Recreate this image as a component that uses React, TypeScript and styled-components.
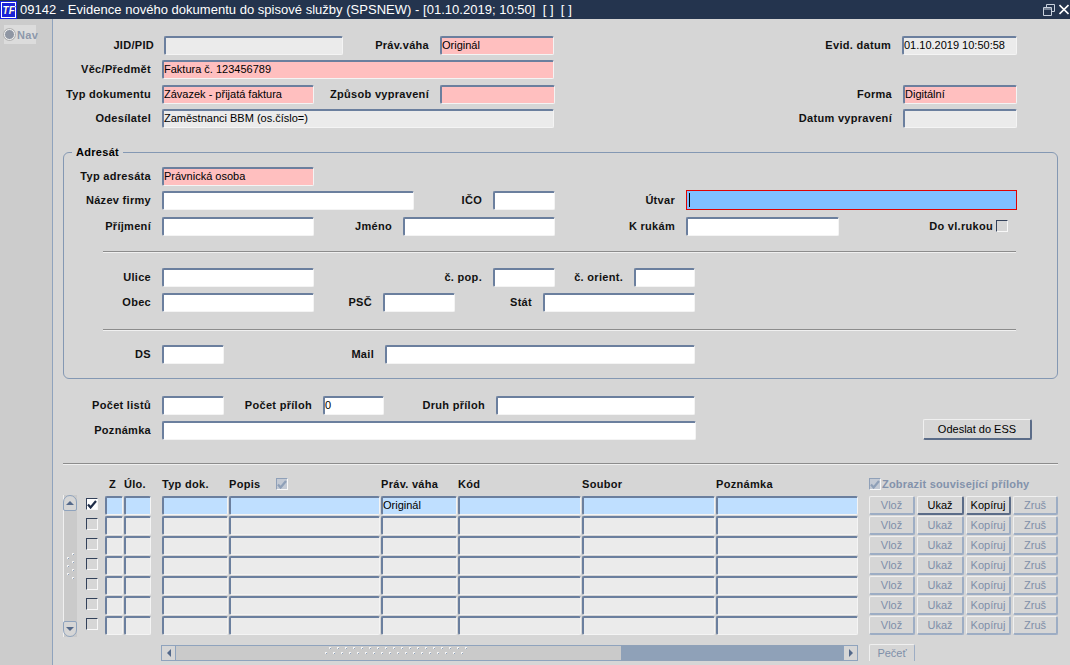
import React from 'react';
import styled, { createGlobalStyle } from 'styled-components';

const GlobalStyle = createGlobalStyle`
  html, body { margin: 0; padding: 0; background: #d6d6d6; overflow: hidden; }
  body { font-family: "Liberation Sans", Arial, sans-serif; font-size: 11px; color: #000; }
`;

const Page = styled.div`
  width: 1070px;
  height: 665px;
  display: flex;
  flex-direction: column;
  overflow: hidden;
`;

const TitleBar = styled.div`
  height: 19px;
  flex: none;
  background: #24344e;
  color: #fff;
  display: flex;
  align-items: center;
  font-size: 13px;
  letter-spacing: 0.02px;
  white-space: pre;
  padding-right: 1px;
`;

const TitleText = styled.span`
  flex: 1;
  margin-left: 3px;
`;

const Logo = styled.svg`
  width: 17px;
  height: 18px;
  flex: none;
`;

const RestoreIcon = styled.svg`
  width: 12px;
  height: 12px;
  margin-right: 4px;
  flex: none;
`;

const CloseIcon = styled.svg`
  width: 10px;
  height: 11px;
  flex: none;
`;

const Body = styled.div`
  flex: 1;
  display: flex;
  min-height: 0;
`;

const Sidebar = styled.div`
  width: 53px;
  flex: none;
  box-sizing: border-box;
  background: #cccccc;
  border-right: 1px solid #8fa3bd;
  padding: 6px 0 0 4px;
`;

const NavTab = styled.div`
  width: 32px;
  height: 19px;
  background: #dcdcdc;
  display: flex;
  align-items: center;
  color: #8d98ab;
  font-weight: bold;
  font-size: 11px;
  letter-spacing: 0.3px;
  gap: 2px;
`;

const NavRadio = styled.span`
  width: 11px;
  height: 11px;
  box-sizing: border-box;
  border-radius: 50%;
  background: #8f96a3;
  border: 1px solid #f4f4f4;
  box-shadow: 0 0 0 1px #b4b4b4;
  flex: none;
`;

const Main = styled.div`
  flex: 1;
  min-width: 0;
  padding-top: 16px;
`;

const Row = styled.div<{ $mt?: number }>`
  display: flex;
  align-items: center;
  height: 20px;
  margin-top: ${p => p.$mt ?? 0}px;
`;

const Label = styled.label<{ $w: number; $pr?: number }>`
  width: ${p => p.$w}px;
  flex: none;
  box-sizing: border-box;
  padding-right: ${p => p.$pr ?? 11}px;
  text-align: right;
  font-weight: bold;
  font-size: 11px;
  letter-spacing: 0.3px;
  white-space: nowrap;
  color: #111;
`;

const fieldColors: Record<string, string> = {
  white: '#ffffff',
  grey: '#ebebeb',
  pink: '#ffbfbf',
  focus: '#80bfff',
  select: '#bfdfff',
};

const Field = styled.div<{ $w?: number; $bg?: string }>`
  width: ${p => (p.$w ? `${p.$w}px` : 'auto')};
  height: 19px;
  flex: none;
  box-sizing: border-box;
  background: ${p => fieldColors[p.$bg ?? 'white']};
  border: 1px solid #f4f4f4;
  border-top: 2px solid #6b7f9e;
  border-left: 2px solid #6b7f9e;
  border-radius: 2px;
  font-size: 11px;
  line-height: 14px;
  white-space: nowrap;
  overflow: hidden;
`;

const FocusField = styled.div`
  width: 331px;
  height: 20px;
  flex: none;
  box-sizing: border-box;
  background: ${fieldColors.focus};
  border: 1px solid #e00000;
  display: flex;
  align-items: center;
  padding-left: 2px;
`;

const Caret = styled.span`
  width: 1px;
  height: 14px;
  background: #000;
`;

const Box = styled.div<{ $bg?: string }>`
  width: 12px;
  height: 12px;
  flex: none;
  box-sizing: border-box;
  background: ${p => p.$bg ?? '#d6d6d6'};
  border-top: 1px solid #33415a;
  border-left: 1px solid #33415a;
  border-right: 1px solid #f8f8f8;
  border-bottom: 1px solid #f8f8f8;
  display: flex;
  align-items: center;
  justify-content: center;
`;

const DisabledBox = styled(Box)`
  background: #c4cad4;
  border-top-color: #8fa0b8;
  border-left-color: #8fa0b8;
`;

const PopisBox = styled(DisabledBox)`
  margin-left: 15px;
`;

const Fieldset = styled.fieldset`
  margin: 17px 0 0 10px;
  padding: 7px 0 0;
  width: 993px;
  height: 225px;
  box-sizing: content-box;
  border: 1px solid #8498b3;
  border-radius: 6px;
`;

const Legend = styled.legend`
  margin-left: 8px;
  padding: 0 4px;
  font-weight: bold;
  font-size: 11px;
  letter-spacing: 0.3px;
  line-height: 14px;
`;

const Rule = styled.div<{ $ml: number; $w: number; $mt: number }>`
  margin-left: ${p => p.$ml}px;
  margin-top: ${p => p.$mt}px;
  width: ${p => p.$w}px;
  border-top: 1px solid #8c8c8c;
  border-bottom: 1px solid #f0f0f0;
`;

const Button = styled.button<{ $active?: boolean }>`
  height: 19px;
  box-sizing: border-box;
  background: #d6d6d6;
  padding: 0;
  font-family: inherit;
  font-size: 11px;
  color: ${p => (p.$active ? '#000' : '#7f8fa9')};
  border-style: solid;
  border-width: 1px 2px 2px 1px;
  border-color: ${p =>
    p.$active ? '#f0f0f0 #5b6c88 #5b6c88 #f0f0f0' : '#f0f0f0 #9dadc4 #9dadc4 #f0f0f0'};
  border-radius: 2px;
`;

const SendButton = styled(Button)`
  width: 109px;
  height: 21px;
  margin: -1px 0 0 227px;
  color: #000;
  border-color: #f0f0f0 #5b6c88 #5b6c88 #f0f0f0;
`;

const TableArea = styled.div`
  display: flex;
  align-items: flex-start;
  margin: 11px 0 0 10px;
`;

const VScroll = styled.div`
  width: 14px;
  height: 142px;
  margin-top: 19px;
  flex: none;
  box-sizing: border-box;
  display: flex;
  flex-direction: column;
  background: #cacaca;
  border-left: 1px solid #f0f0f0;
`;

const ScrollCap = styled.div<{ $end?: boolean }>`
  height: 16px;
  flex: none;
  box-sizing: border-box;
  background: #d6d6d6;
  border: 1px solid #8fa3bd;
  border-radius: ${p => (p.$end ? '2px 2px 7px 7px' : '7px 7px 2px 2px')};
  margin: 0 0 0 -1px;
  display: flex;
  align-items: center;
  justify-content: center;
`;

const VGrip = styled.div`
  flex: 1;
  display: flex;
  align-items: center;
  justify-content: center;
`;

const TableGrid = styled.div`
  margin-left: 9px;
  display: grid;
  grid-template-columns: 19px 19px 38px 67px 152px 77px 124px 134px 143px 10px 48px 49px 47px 47px;
  grid-auto-rows: 20px;
  align-items: start;
`;

const Head = styled.div<{ $mute?: boolean; $span?: number; $pl?: number }>`
  height: 16px;
  padding-left: ${p => p.$pl ?? 0}px;
  display: flex;
  align-items: center;
  gap: 1px;
  font-weight: bold;
  font-size: 11px;
  letter-spacing: ${p => (p.$mute ? 0.2 : 0.3)}px;
  white-space: nowrap;
  color: ${p => (p.$mute ? '#8392ab' : '#111')};
  grid-column: ${p => (p.$span ? `span ${p.$span}` : 'auto')};
`;

const Cell = styled(Field)<{ $mr?: number }>`
  margin-right: ${p => p.$mr ?? 1}px;
`;

const CheckWrap = styled.div`
  padding-top: 2px;
`;

const RowButton = styled(Button)`
  width: calc(100% - 2px);
`;

const Spacer = styled.div``;

const HScrollRow = styled.div`
  display: flex;
  align-items: flex-start;
  margin: 8px 0 0 108px;
`;

const HScroll = styled.div`
  width: 697px;
  height: 16px;
  flex: none;
  box-sizing: border-box;
  display: flex;
  background: #8fa1b8;
`;

const HCap = styled.div`
  width: 15px;
  flex: none;
  background: #d6d6d6;
  border: 1px solid #8fa3bd;
  display: flex;
  align-items: center;
  justify-content: center;
  box-sizing: border-box;
`;

const HThumb = styled.div`
  width: 445px;
  flex: none;
  background: #cacaca;
  border-top: 1px solid #8fa3bd;
  border-bottom: 1px solid #8fa3bd;
  box-sizing: border-box;
  display: flex;
  align-items: center;
  justify-content: center;
`;

const HTrack = styled.div`
  flex: 1;
`;

const SealTab = styled.div`
  width: 46px;
  height: 17px;
  margin: -1px 0 0 11px;
  flex: none;
  box-sizing: border-box;
  text-align: center;
  line-height: 16px;
  color: #7f8fa9;
  border: 1px solid #9dadc4;
  border-bottom: none;
  border-top-color: #f0f0f0;
  border-left-color: #f0f0f0;
  border-radius: 2px 2px 0 0;
`;

const CheckMark = ({ color = '#1f2d48' }: { color?: string }) => (
  <svg width="10" height="9" viewBox="0 0 10 9">
    <path d="M1 4.5 L3.6 7.5 L9 1" fill="none" stroke={color} strokeWidth="2.2" />
  </svg>
);

const Triangle = ({ dir }: { dir: 'up' | 'down' | 'left' | 'right' }) => {
  const points = {
    up: '0,5 8,5 4,1',
    down: '0,1 8,1 4,5',
    left: '6,0 6,8 2,4',
    right: '2,0 2,8 6,4',
  }[dir];
  const size = dir === 'up' || dir === 'down' ? { w: 8, h: 6 } : { w: 8, h: 8 };
  return (
    <svg width={size.w} height={size.h} viewBox={`0 0 ${size.w} ${size.h}`}>
      <polygon points={points} fill="#54698a" />
    </svg>
  );
};

const Dots = ({ cols, rows }: { cols: number; rows: number }) => {
  const dots: React.ReactElement[] = [];
  for (let r = 0; r < rows; r++) {
    for (let c = 0; c < cols; c++) {
      const x = c * 8 + (r % 2 ? 0 : 4);
      const y = r * 5;
      dots.push(<rect key={`w${r}-${c}`} x={x} y={y} width="2" height="2" fill="#f4f4f4" />);
      dots.push(<rect key={`b${r}-${c}`} x={x + 1} y={y + 1} width="1" height="1" fill="#8fa3bd" />);
    }
  }
  return (
    <svg width={cols * 8 + 4} height={rows * 5 + 2}>
      {dots}
    </svg>
  );
};

const VDots = () => {
  const dots: React.ReactElement[] = [];
  for (let r = 0; r < 7; r++) {
    const x = r % 2 ? 0 : 5;
    dots.push(<rect key={`w${r}`} x={x} y={r * 4} width="2" height="2" fill="#f4f4f4" />);
    dots.push(<rect key={`b${r}`} x={x + 1} y={r * 4 + 1} width="1" height="1" fill="#8fa3bd" />);
  }
  return (
    <svg width="7" height="26">
      {dots}
    </svg>
  );
};

const rows = [0, 1, 2, 3, 4, 5, 6];

export default function App() {
  return (
    <Page>
      <GlobalStyle />
      <TitleBar>
        <Logo viewBox="0 0 17 18">
          <rect x="0" y="0" width="17" height="18" fill="#1a22e0" />
          <rect x="1" y="1" width="15" height="16" fill="#fff" />
          <rect x="2" y="2" width="13" height="14" fill="#1a22d8" />
          <text x="3" y="13.4" fontFamily="Liberation Sans" fontStyle="italic" fontWeight="bold" fontSize="10" fill="#0a0f40">
            TF
          </text>
          <text x="2.6" y="13" fontFamily="Liberation Sans" fontStyle="italic" fontWeight="bold" fontSize="10" fill="#fff">
            TF
          </text>
        </Logo>
        <TitleText>{'09142 - Evidence nového dokumentu do spisové služby (SPSNEW) - [01.10.2019; 10:50]  [ ]  [ ]'}</TitleText>
        <RestoreIcon viewBox="0 0 12 12">
          <path d="M3.5 3.5V0.5H11.5V7.5H8.5M0.5 3.5H8.5V11.5H0.5Z M0.5 5H8.5" fill="none" stroke="#c8d0dc" />
        </RestoreIcon>
        <CloseIcon viewBox="0 0 10 11">
          <path d="M0.5 1L9.5 10M9.5 1L0.5 10" stroke="#fff" strokeWidth="1.6" />
        </CloseIcon>
      </TitleBar>
      <Body>
        <Sidebar>
          <NavTab>
            <NavRadio />
            Nav
          </NavTab>
        </Sidebar>
        <Main>
          <Row>
            <Label $w={111} $pr={10}>JID/PID</Label>
            <Field $w={179} $bg="grey" />
            <Label $w={97}>Práv.váha</Label>
            <Field $w={114} $bg="pink">Originál</Field>
            <Label $w={348}>Evid. datum</Label>
            <Field $w={115} $bg="grey">01.10.2019 10:50:58</Field>
          </Row>
          <Row $mt={4}>
            <Label $w={109}>Věc/Předmět</Label>
            <Field $w={392} $bg="pink">Faktura č. 123456789</Field>
          </Row>
          <Row $mt={5}>
            <Label $w={109}>Typ dokumentu</Label>
            <Field $w={152} $bg="pink">Závazek - přijatá faktura</Field>
            <Label $w={126}>Způsob vypravení</Label>
            <Field $w={115} $bg="pink" />
            <Label $w={348}>Forma</Label>
            <Field $w={114} $bg="pink">Digitální</Field>
          </Row>
          <Row $mt={4}>
            <Label $w={109}>Odesílatel</Label>
            <Field $w={392} $bg="grey">Zaměstnanci BBM (os.číslo=)</Field>
            <Label $w={349}>Datum vypravení</Label>
            <Field $w={114} $bg="grey" />
          </Row>

          <Fieldset>
            <Legend>Adresát</Legend>
            <Row>
              <Label $w={98}>Typ adresáta</Label>
              <Field $w={152} $bg="pink">Právnická osoba</Field>
            </Row>
            <Row $mt={4}>
              <Label $w={98}>Název firmy</Label>
              <Field $w={252} />
              <Label $w={79}>IČO</Label>
              <Field $w={62} />
              <Label $w={131}>Útvar</Label>
              <FocusField>
                <Caret />
              </FocusField>
            </Row>
            <Row $mt={6}>
              <Label $w={98}>Příjmení</Label>
              <Field $w={152} />
              <Label $w={89}>Jméno</Label>
              <Field $w={152} />
              <Label $w={131}>K rukám</Label>
              <Field $w={153} />
              <Label $w={157} $pr={3}>Do vl.rukou</Label>
              <Box />
            </Row>
            <Rule $ml={39} $w={913} $mt={15} />
            <Row $mt={14}>
              <Label $w={98}>Ulice</Label>
              <Field $w={152} />
              <Label $w={179}>č. pop.</Label>
              <Field $w={62} />
              <Label $w={79}>č. orient.</Label>
              <Field $w={61} />
            </Row>
            <Row $mt={5}>
              <Label $w={98}>Obec</Label>
              <Field $w={152} />
              <Label $w={69}>PSČ</Label>
              <Field $w={72} />
              <Label $w={88}>Stát</Label>
              <Field $w={152} />
            </Row>
            <Rule $ml={39} $w={913} $mt={17} />
            <Row $mt={13}>
              <Label $w={98}>DS</Label>
              <Field $w={62} />
              <Label $w={161}>Mail</Label>
              <Field $w={310} />
            </Row>
          </Fieldset>

          <Row $mt={16}>
            <Label $w={109}>Počet listů</Label>
            <Field $w={62} />
            <Label $w={99}>Počet příloh</Label>
            <Field $w={61}>0</Field>
            <Label $w={112}>Druh příloh</Label>
            <Field $w={199} />
          </Row>
          <Row $mt={5}>
            <Label $w={109}>Poznámka</Label>
            <Field $w={534} />
            <SendButton>Odeslat do ESS</SendButton>
          </Row>
          <Rule $ml={10} $w={995} $mt={23} />

          <TableArea>
            <VScroll>
              <ScrollCap>
                <Triangle dir="up" />
              </ScrollCap>
              <VGrip>
                <VDots />
              </VGrip>
              <ScrollCap $end>
                <Triangle dir="down" />
              </ScrollCap>
            </VScroll>
            <TableGrid>
              <Spacer />
              <Head $pl={4}>Z</Head>
              <Head>Úlo.</Head>
              <Head>Typ dok.</Head>
              <Head>
                Popis
                <PopisBox>
                  <CheckMark color="#8fa0b8" />
                </PopisBox>
              </Head>
              <Head>Práv. váha</Head>
              <Head>Kód</Head>
              <Head>Soubor</Head>
              <Head>Poznámka</Head>
              <Spacer />
              <Head $span={4} $mute>
                <DisabledBox>
                  <CheckMark color="#8fa0b8" />
                </DisabledBox>
                Zobrazit související přílohy
              </Head>
              {rows.map(i => {
                const bg = i === 0 ? 'select' : 'grey';
                return (
                  <React.Fragment key={i}>
                    <CheckWrap>
                      <Box $bg={i === 0 ? '#fff' : '#d6d6d6'}>{i === 0 && <CheckMark />}</Box>
                    </CheckWrap>
                    <Cell $bg={bg} />
                    <Cell $bg={bg} $mr={11} />
                    <Cell $bg={bg} />
                    <Cell $bg={bg} />
                    <Cell $bg={bg}>{i === 0 ? 'Originál' : ''}</Cell>
                    <Cell $bg={bg} />
                    <Cell $bg={bg} />
                    <Cell $bg={bg} />
                    <Spacer />
                    <RowButton>Vlož</RowButton>
                    <RowButton $active={i === 0}>Ukaž</RowButton>
                    <RowButton $active={i === 0}>Kopíruj</RowButton>
                    <RowButton>Zruš</RowButton>
                  </React.Fragment>
                );
              })}
            </TableGrid>
          </TableArea>

          <HScrollRow>
            <HScroll>
              <HCap>
                <Triangle dir="left" />
              </HCap>
              <HThumb>
                <Dots cols={18} rows={2} />
              </HThumb>
              <HTrack />
              <HCap>
                <Triangle dir="right" />
              </HCap>
            </HScroll>
            <SealTab>Pečeť</SealTab>
          </HScrollRow>
        </Main>
      </Body>
    </Page>
  );
}
